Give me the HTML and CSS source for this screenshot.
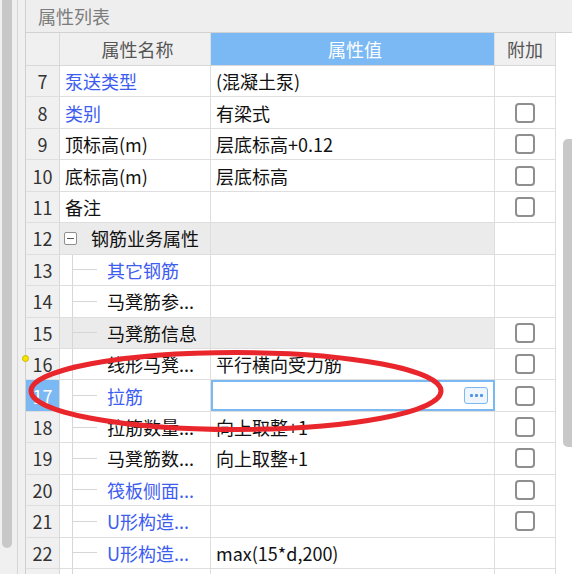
FILE: index.html
```html
<!DOCTYPE html>
<html lang="zh-CN">
<head>
<meta charset="utf-8">
<title>属性列表</title>
<link rel="stylesheet" href="styles.css">
</head>
<body>
<div class="app">
  <div class="side">
    <div class="side-thumb"></div>
    <div class="side-sep"></div>
  </div>
  <div class="panel">
    <div class="title">属性列表</div>
    <div class="body">
      <div class="grid">
        <div class="row head">
          <div class="c num"></div>
          <div class="c name hc">属性名称</div>
          <div class="c val hc active">属性值</div>
          <div class="c add hc">附加</div>
        </div>
        <div class="row">
          <div class="c num">7</div>
          <div class="c name blue">泵送类型</div>
          <div class="c val">(混凝土泵)</div>
          <div class="c add"></div>
        </div>
        <div class="row">
          <div class="c num">8</div>
          <div class="c name blue">类别</div>
          <div class="c val">有梁式</div>
          <div class="c add"><span class="cb"></span></div>
        </div>
        <div class="row">
          <div class="c num">9</div>
          <div class="c name">顶标高(m)</div>
          <div class="c val">层底标高+0.12</div>
          <div class="c add"><span class="cb"></span></div>
        </div>
        <div class="row">
          <div class="c num">10</div>
          <div class="c name">底标高(m)</div>
          <div class="c val">层底标高</div>
          <div class="c add"><span class="cb"></span></div>
        </div>
        <div class="row">
          <div class="c num">11</div>
          <div class="c name">备注</div>
          <div class="c val"></div>
          <div class="c add"><span class="cb"></span></div>
        </div>
        <div class="row group">
          <div class="c num">12</div>
          <div class="c name grp"><span class="toggle"></span><span class="gtext">钢筋业务属性</span></div>
          <div class="c val"></div>
          <div class="c add"></div>
        </div>
        <div class="row">
          <div class="c num">13</div>
          <div class="c name tree"><span class="stub"></span><span class="blue">其它钢筋</span></div>
          <div class="c val"></div>
          <div class="c add"></div>
        </div>
        <div class="row">
          <div class="c num">14</div>
          <div class="c name tree"><span class="stub"></span><span>马凳筋参...</span></div>
          <div class="c val"></div>
          <div class="c add"></div>
        </div>
        <div class="row group">
          <div class="c num">15</div>
          <div class="c name tree"><span class="stub"></span><span>马凳筋信息</span></div>
          <div class="c val"></div>
          <div class="c add"><span class="cb"></span></div>
        </div>
        <div class="row">
          <div class="c num">16</div>
          <div class="c name tree"><span class="stub"></span><span>线形马凳...</span></div>
          <div class="c val">平行横向受力筋</div>
          <div class="c add"><span class="cb"></span></div>
        </div>
        <div class="row">
          <div class="c num sel">17</div>
          <div class="c name tree"><span class="stub"></span><span class="blue">拉筋</span></div>
          <div class="c val editing"><span class="more"><i></i><i></i><i></i></span></div>
          <div class="c add"><span class="cb"></span></div>
        </div>
        <div class="row">
          <div class="c num">18</div>
          <div class="c name tree"><span class="stub"></span><span>拉筋数量...</span></div>
          <div class="c val">向上取整+1</div>
          <div class="c add"><span class="cb"></span></div>
        </div>
        <div class="row">
          <div class="c num">19</div>
          <div class="c name tree"><span class="stub"></span><span>马凳筋数...</span></div>
          <div class="c val">向上取整+1</div>
          <div class="c add"><span class="cb"></span></div>
        </div>
        <div class="row">
          <div class="c num">20</div>
          <div class="c name tree"><span class="stub"></span><span class="blue">筏板侧面...</span></div>
          <div class="c val"></div>
          <div class="c add"><span class="cb"></span></div>
        </div>
        <div class="row">
          <div class="c num">21</div>
          <div class="c name tree"><span class="stub"></span><span class="blue">U形构造...</span></div>
          <div class="c val"></div>
          <div class="c add"><span class="cb"></span></div>
        </div>
        <div class="row">
          <div class="c num">22</div>
          <div class="c name tree"><span class="stub"></span><span class="blue">U形构造...</span></div>
          <div class="c val">max(15*d,200)</div>
          <div class="c add"></div>
        </div>
        <div class="row">
          <div class="c num"></div>
          <div class="c name tree"><span class="stub"></span></div>
          <div class="c val"></div>
          <div class="c add"></div>
        </div>
      </div>
      <div class="vscroll"><div class="vthumb"></div></div>
    </div>
  </div>
</div>
<svg class="mark" width="572" height="574" viewBox="0 0 572 574" aria-hidden="true">
  <ellipse cx="236" cy="391" rx="205" ry="38.5" fill="none" stroke="#e8262b" stroke-width="5"/>
  <circle cx="25.5" cy="358.5" r="3" fill="#f4e500" stroke="#c9b800" stroke-width="1"/>
</svg>
</body>
</html>
```

FILE: styles.css
```css
* { box-sizing: border-box; }
html, body {
  margin: 0;
  padding: 0;
  width: 572px;
  height: 574px;
  overflow: hidden;
  background: #ffffff;
  font-family: "Noto Sans CJK SC", "Noto Sans", sans-serif;
  font-size: 18px;
  color: #111111;
}
.app {
  display: flex;
  height: 574px;
}
.side {
  width: 25px;
  flex: none;
  background: #f0f0f0;
  display: flex;
  align-items: flex-start;
}
.side-thumb {
  width: 10px;
  height: 548px;
  margin-left: 2px;
  background: #c8c8c8;
  border-radius: 0 0 5px 5px;
}
.side-sep {
  width: 1px;
  height: 574px;
  margin-left: 5px;
  background: #d6d6d6;
}
.panel {
  flex: 1;
  display: flex;
  flex-direction: column;
  border-left: 1px solid #cfcfcf;
}
.title {
  height: 33px;
  flex: none;
  background: #eeeeee;
  border-bottom: 1px solid #d2d2d2;
  color: #7c7c7c;
  padding-left: 12px;
  display: flex;
  align-items: center;
  line-height: 1;
}
.body {
  flex: 1;
  display: flex;
  overflow: hidden;
}
.grid {
  width: 530px;
  flex: none;
}
.row {
  display: grid;
  grid-template-columns: 34px 151px 284px 61px;
  height: 31.45px;
  border-bottom: 1px solid #dedede;
}
.row.head {
  height: 33px;
  border-bottom-color: #d8d8d8;
}
.c {
  border-right: 1px solid #dedede;
  display: flex;
  align-items: center;
  white-space: nowrap;
  overflow: hidden;
  line-height: 1;
  min-width: 0;
}
.num {
  background: #f0f0f0;
  justify-content: center;
  color: #333333;
  border-right-color: #d8d8d8;
}
.num.sel {
  background: #7bb9f5;
  color: #ffffff;
}
.head .c { background: #f0f0f0; }
.hc {
  justify-content: center;
  color: #555555;
}
.head .active {
  background: #7bb9f5;
  color: #ffffff;
}
.name { padding-left: 5px; }
.val { padding-left: 5px; }
.add { justify-content: center; }
.blue { color: #3d5cf0; }
.group .name, .group .val { background: #ebebeb; }
.grp { padding-left: 4px; }
.toggle {
  width: 13px;
  height: 13px;
  border: 1px solid #8f8f8f;
  border-radius: 2px;
  background: #ffffff;
  display: flex;
  align-items: center;
  justify-content: center;
  flex: none;
}
.toggle::before {
  content: "";
  width: 7px;
  height: 1px;
  background: #555555;
}
.gtext { margin-left: 14px; }
.tree {
  padding-left: 12px;
  align-self: stretch;
}
.stub {
  width: 25px;
  height: 100%;
  flex: none;
  border-left: 1px solid #d6d6d6;
  background: linear-gradient(#d6d6d6, #d6d6d6) no-repeat left center / 100% 1px;
  margin-right: 10px;
}
.cb {
  width: 20px;
  height: 20px;
  border: 2px solid #8f8f8f;
  border-radius: 4px;
  background: #ffffff;
}
.editing {
  outline: 2px solid #7bb9f5;
  outline-offset: -2px;
  justify-content: flex-end;
  padding-right: 6px;
  background: #ffffff;
}
.more {
  width: 24px;
  height: 17px;
  border: 1px solid #7bb9f5;
  border-radius: 3px;
  background: #eef5fd;
  display: flex;
  align-items: center;
  justify-content: center;
  gap: 2px;
}
.more i {
  width: 3px;
  height: 3px;
  background: #4d95e6;
  border-radius: 1px;
}
.vscroll {
  flex: 1;
  background: #ffffff;
  display: flex;
  justify-content: flex-end;
  padding-top: 106px;
}
.vthumb {
  width: 9px;
  height: 308px;
  background: #c8c8c8;
  border-radius: 5px 0 0 5px;
}
.mark {
  position: absolute;
  left: 0;
  top: 0;
  pointer-events: none;
}
```
